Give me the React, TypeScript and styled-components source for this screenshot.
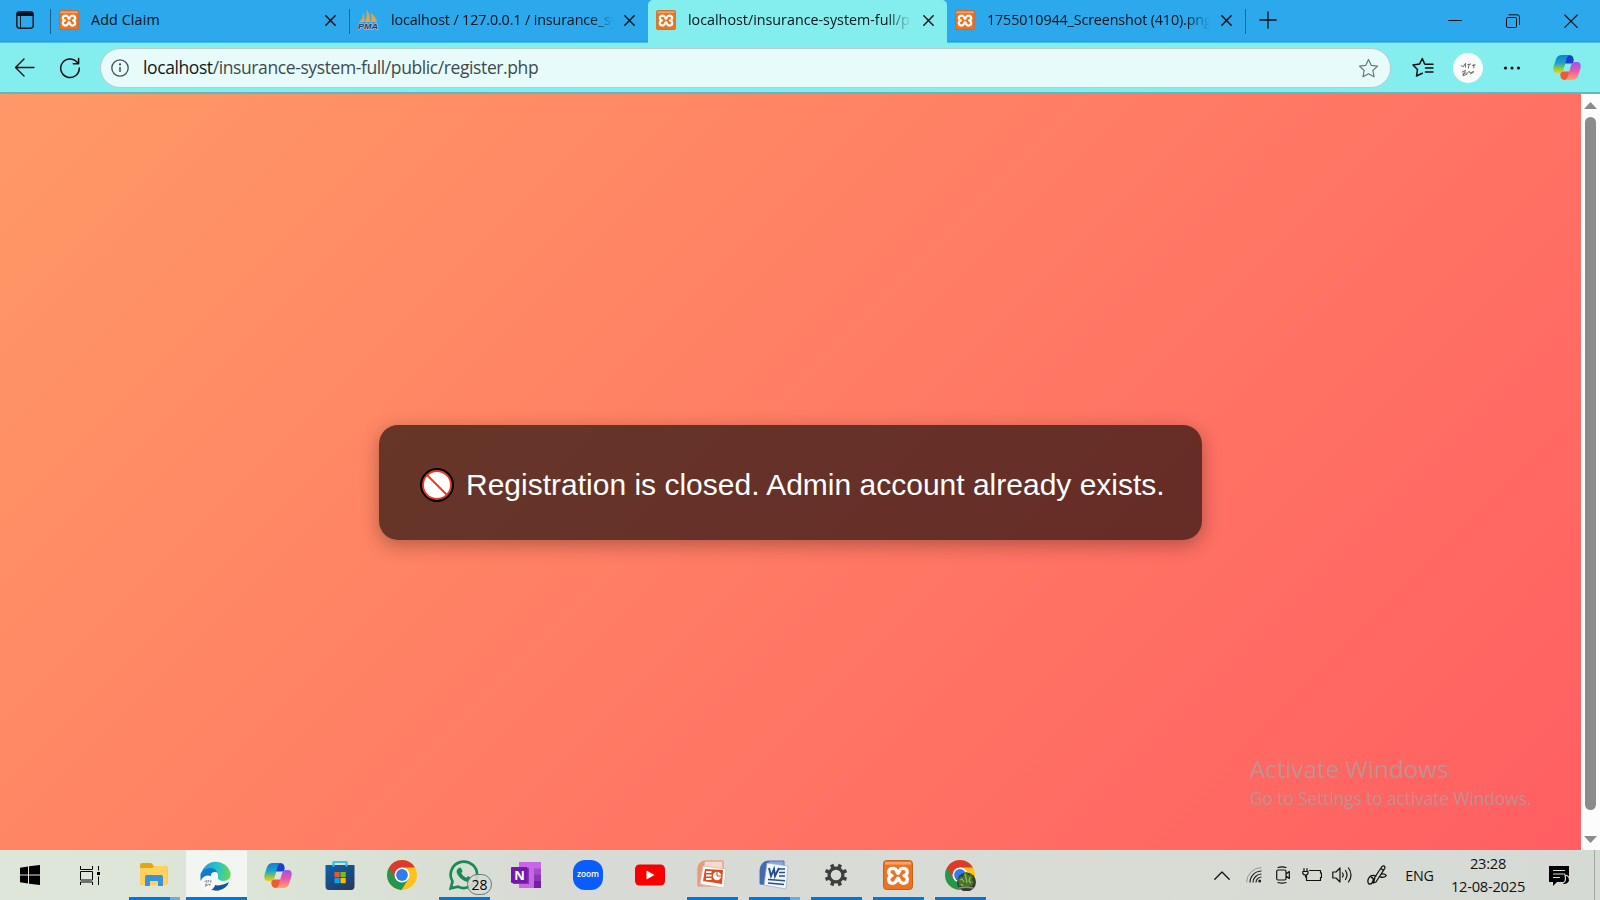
import React, { ReactNode } from "react";
import styled, { createGlobalStyle } from "styled-components";

const GlobalStyle = createGlobalStyle`
  * { box-sizing: border-box; }
  body { margin: 0; overflow: hidden; font-family: "Open Sans", "Noto Sans", sans-serif; color: #111; }
  svg { display: block; flex: none; }
`;

const Screen = styled.div`
  width: 1600px;
  height: 900px;
  display: flex;
  flex-direction: column;
  overflow: hidden;
`;

/* ---------- tab strip ---------- */
const TabStrip = styled.div`
  height: 43px;
  flex: none;
  display: flex;
  background: linear-gradient(#2ba9ec 0 39px, #289fe0 42px, #45bdec 42px);
`;
const WorkspaceButton = styled.div`
  width: 50px;
  padding: 11px 0 0 16px;
`;
const Separator = styled.div`
  width: 1px;
  height: 25px;
  margin-top: 9px;
  background: #17618b;
`;
const Tab = styled.div<{ $active?: boolean }>`
  width: ${(p) => (p.$active ? 299 : 298)}px;
  height: 43px;
  flex: none;
  display: flex;
  align-items: flex-start;
  padding: 10px 13px 0 8px;
  background: ${(p) => (p.$active ? "#84edee" : "transparent")};
  border-radius: 5px 5px 0 0;
`;
const TabTitle = styled.span<{ $fade?: boolean; $spacing?: number }>`
  width: 223px;
  height: 22px;
  margin: -1px 0 0 12px;
  font-size: 14.3px;
  line-height: 21px;
  letter-spacing: ${(p) => p.$spacing ?? 0}px;
  color: #04141c;
  white-space: nowrap;
  overflow: hidden;
  ${(p) => p.$fade && "mask-image: linear-gradient(90deg, #000 calc(100% - 24px), transparent);"}
`;
const TabClose = styled.div`
  margin: 5px 0 0 auto;
`;
const NewTab = styled.div`
  padding: 11px 0 0 13px;
`;
const WindowControls = styled.div`
  margin-left: auto;
  display: flex;
`;
const WindowButton = styled.div`
  width: 58px;
  height: 42px;
  display: flex;
  justify-content: center;
  align-items: center;
`;

/* ---------- toolbar ---------- */
const Toolbar = styled.div`
  height: 51px;
  flex: none;
  display: flex;
  padding: 5px 19px 0 14px;
  background: #84edee;
  border-bottom: 2px solid #62b7ba;
`;
const NavButton = styled.div<{ $w: number }>`
  width: ${(p) => p.$w}px;
  height: 39px;
  display: flex;
  align-items: center;
`;
const AddressBar = styled.div`
  width: 1291px;
  height: 40px;
  display: flex;
  align-items: center;
  padding: 0 11px 0 10px;
  background: #e7fbfb;
  border: 1px solid #b9cccd;
  border-radius: 20px;
`;
const Url = styled.span`
  flex: 1;
  margin: -2px 0 0 14px;
  font-size: 17.5px;
  line-height: 24px;
  letter-spacing: -0.4px;
  color: #3e4a4e;
  b { font-weight: 400; color: #11181a; }
`;
const ToolbarActions = styled.div`
  flex: 1;
  height: 39px;
  display: flex;
  align-items: center;
  padding-left: 21px;
`;
const Avatar = styled.div`
  width: 30px;
  height: 30px;
  margin: 0 20px 0 19px;
  border-radius: 50%;
  background: #fafbfb;
`;
const CopilotButton = styled.div`
  margin-left: auto;
`;

/* ---------- page ---------- */
const Viewport = styled.div`
  position: relative;
  height: 756px;
  flex: none;
  display: flex;
`;
const PageScroll = styled.div`
  flex: 1;
  overflow: hidden;
`;
const PageBody = styled.main`
  height: 777px;
  display: flex;
  align-items: center;
  justify-content: center;
  background: linear-gradient(135deg, #ff9966, #ff5e62);
`;
const Notice = styled.div`
  width: 823px;
  height: 115px;
  display: flex;
  align-items: center;
  padding: 4px 0 0 41px;
  gap: 12px;
  border-radius: 19px;
  background: rgba(0, 0, 0, 0.6);
  box-shadow: 0 5px 19px rgba(0, 0, 0, 0.3);
  color: #fff;
  font: 30px/38px "Liberation Sans", Arial, sans-serif;
  white-space: nowrap;
`;
const ScrollTrack = styled.div`
  width: 19px;
  display: flex;
  flex-direction: column;
  align-items: center;
  padding: 8px 0 7px;
  background: #fcfcfc;
`;
const ScrollThumb = styled.div`
  width: 11px;
  height: 693px;
  margin: 8px 0 auto;
  border-radius: 6px;
  background: #8b8b8b;
`;
const Watermark = styled.div`
  position: absolute;
  left: 1250px;
  top: 657px;
  color: rgba(160, 165, 162, 0.68);
  white-space: nowrap;
`;
const WatermarkTitle = styled.div`
  font-size: 24.5px;
  line-height: 36px;
  letter-spacing: -0.15px;
`;
const WatermarkText = styled.div`
  font-size: 17.6px;
  line-height: 23px;
  letter-spacing: -0.2px;
`;

/* ---------- taskbar ---------- */
const Taskbar = styled.div`
  height: 50px;
  flex: none;
  display: flex;
  background: linear-gradient(90deg, #dde6d8 0, #dce5d7 250px, #d8dbd5 550px, #d8dcd5 1100px, #d6dad4 100%);
`;
const SystemButton = styled.div`
  width: 60px;
  height: 50px;
  display: flex;
  align-items: center;
  justify-content: center;
`;
const AppList = styled.div`
  display: flex;
  gap: 1px;
  margin-left: 4px;
`;
const AppButton = styled.div<{ $focused?: boolean; $state?: "one" | "many" }>`
  position: relative;
  width: 61px;
  height: 50px;
  display: flex;
  align-items: center;
  justify-content: center;
  padding-right: 2px;
  background: ${(p) => (p.$focused ? "#f3f5f1" : "transparent")};
  &::after {
    content: "";
    position: absolute;
    bottom: 0;
    left: ${(p) => (p.$focused ? 0 : 5)}px;
    right: ${(p) => (p.$focused ? 0 : 5)}px;
    height: 3px;
    background: ${(p) =>
      p.$state === "many"
        ? "linear-gradient(90deg, #0078d7 41px, #69ade3 41px)"
        : p.$state || p.$focused
        ? "#0078d7"
        : "transparent"};
  }
`;
const CountBadge = styled.span`
  position: absolute;
  left: 33px;
  top: 24px;
  width: 25px;
  height: 21px;
  border: 1px solid #6c7370;
  border-radius: 11px;
  background: rgba(214, 220, 214, 0.9);
  font-size: 14px;
  font-weight: 500;
  line-height: 19px;
  text-align: center;
  color: #000;
`;
const Tray = styled.div`
  margin-left: auto;
  display: flex;
`;
const TrayItem = styled.div<{ $w: number }>`
  width: ${(p) => p.$w}px;
  height: 50px;
  display: flex;
  align-items: center;
  justify-content: center;
`;
const Language = styled.span`
  font-size: 14.3px;
  letter-spacing: -0.25px;
`;
const Clock = styled.div`
  width: 92px;
  padding-top: 2px;
  text-align: center;
  font-size: 14.7px;
  line-height: 23px;
  letter-spacing: -0.25px;
  white-space: nowrap;
`;
const ShowDesktop = styled.div`
  width: 6px;
  margin-left: 10px;
  border-left: 1px solid #a3a7a2;
`;

/* ---------- icons ---------- */
const Line = ({ w, h = w, d, sw = 1.3, color = "#111" }: { w: number; h?: number; d: string; sw?: number; color?: string }) => (
  <svg width={w} height={h} viewBox={`0 0 ${w} ${h}`} fill="none" stroke={color} strokeWidth={sw} strokeLinecap="round" strokeLinejoin="round">
    <path d={d} />
  </svg>
);

const Xampp = ({ size }: { size: number }) => (
  <svg width={size} height={size} viewBox="0 0 30 30">
    <rect x=".5" y=".5" width="29" height="29" rx="3" fill="#ee7321" stroke="#c7601c" />
    <path d="M2 2h26v2.6H2z" fill="#f3a26b" />
    <path
      d="M15 13.400C13.500 12.800 14.200 8.300 10.200 8.300C7.200 8.300 5.800 9.600 5.800 12C5.800 14.200 7 15.200 9 15.700C6.900 16.200 5.700 17.500 5.700 19.600C5.700 22 7.200 23.300 9.700 23.300C14.300 23.300 13.400 18.300 15 18.100C16.600 18.300 15.700 23.300 20.300 23.300C22.800 23.300 24.300 22 24.300 19.600C24.300 17.500 23.100 16.200 21 15.700C23 15.200 24.200 14.200 24.200 12C24.200 9.600 22.800 8.300 19.800 8.300C15.800 8.300 16.500 12.800 15 13.400Z"
      fill="none" stroke="#fff" strokeWidth="3.300" strokeLinejoin="round"
    />
  </svg>
);

const PhpMyAdmin = () => (
  <svg width="21" height="20" viewBox="0 0 21 20">
    <path d="M1 12C4 10 5 7 5.200 3C6.500 6 6.800 9 6 12zM6.800 12C9 8 9 4 8.500 0C12 4 12.500 8 12 12zM12.500 12C14 9 13.500 6 12.700 3C17 6 18.500 9 19 12z" fill="#f5a12d" />
    <path d="M5.200 3L6 12M8.500 0L12 12M12.700 3L19 12" stroke="#c9a56c" strokeWidth=".7" />
    <text x="0" y="19.200" fontFamily="Liberation Sans" fontSize="8" fontWeight="700" fontStyle="italic" textLength="20" lengthAdjust="spacingAndGlyphs" fill="#2b3564" stroke="#c9c6d3" strokeWidth="1" paintOrder="stroke">PMA</text>
  </svg>
);

const Copilot = ({ id }: { id: string }) => (
  <svg width="28" height="27" viewBox="0 0 28 27">
    <defs>
      <linearGradient id={`${id}a`} x1="0" y1="0" x2="0" y2="1">
        <stop offset="0" stopColor="#0d7fdb" /><stop offset=".45" stopColor="#1fa2c8" /><stop offset=".75" stopColor="#8fc44a" /><stop offset="1" stopColor="#f5cb12" />
      </linearGradient>
      <linearGradient id={`${id}b`} x1="0" y1="0" x2="0" y2="1">
        <stop offset="0" stopColor="#9a55ee" /><stop offset=".5" stopColor="#ed56a8" /><stop offset="1" stopColor="#ffa465" />
      </linearGradient>
    </defs>
    <path d="M8 17.500Q6.500 21 8 24Q9 26 12 26H19L16 17.500z" fill="#ef5a35" />
    <path d="M20 9.500Q21.500 6 20 3Q19 1 16 1H10L12 9.500z" fill="#1b3fc8" />
    <path d="M9 1H16.500Q14 2 13 7L10.500 15.500Q9.500 19 6 19H4Q-.8 19 .6 12.500L3 5Q4.500 1 9 1z" fill={`url(#${id}a)`} />
    <path d="M19 26H12Q14.500 25 15.500 20L18 11.500Q19 8 22 8H24Q28.800 8 27.400 14.500L25 22Q23.500 26 19 26z" fill={`url(#${id}b)`} />
  </svg>
);

const Chrome = ({ avatar }: { avatar?: boolean }) => (
  <svg width="32" height="32" viewBox="0 0 32 32">
    <circle cx="16" cy="16" r="15" fill="#ffc31f" />
    <path d="M16 16L3 8.500A15 15 0 0 0 15.500 31L22.500 19.800z" fill="#26964a" />
    <path d="M3 8.500A15 15 0 0 1 29 8.500H16L9.500 19.700z" fill="#dc3a2d" />
    <circle cx="16" cy="16" r="7.500" fill="#fff" />
    <circle cx="16" cy="16" r="5.900" fill="#2f7de9" />
    {avatar && (
      <>
        <circle cx="22.500" cy="23" r="9.500" fill="#373b31" />
        <path d="M14 20l3-2.500 2 .5 1-4 3-1 1 3 3-1 2 3-1 3 2 2-2 4-6 1-7-1z" fill="#47752a" />
        <path d="M16 21l2-1 2 3m1-8l1 4 1 5m3-6l-1 4 2 2m-10 1l2 2" stroke="#8dbb55" strokeWidth="1.300" fill="none" />
        <path d="M15 29q7-1.500 14 0" stroke="#8b8d88" strokeWidth="1.500" fill="none" />
      </>
    )}
  </svg>
);

const scribble = "M1 3l3 1 1-3M6 0v5m2-3l4-1m-2 0l-1 5m4-3l4-1m-2-1v5M2 10l4-2-3 5 4-3m0 2l3-3 1 2 4-2m-12 5l5-2m3 0l4-2";

const FileExplorer = () => (
  <svg width="28" height="24" viewBox="0 0 28 24">
    <path d="M0 2Q0 0 2 0H11Q13 1 13.500 3H25Q27.500 3 27.500 5.500V20Q27.500 22 25 22H2Q0 22 0 20z" fill="#e4a513" />
    <path d="M0 5H12L15 3H25Q27.500 3 27.500 5.500V20Q27.500 22 25 22H2Q0 22 0 20z" fill="#ffd15d" />
    <path d="M5 23V14Q5 12 7 12H21Q23 12 23 14V23H18V18H10V23z" fill="#3e91d3" />
  </svg>
);

const Edge = () => (
  <svg width="31" height="31" viewBox="0 0 31 31">
    <defs>
      <linearGradient id="edgeTop" x1="0" y1=".5" x2="1" y2=".6"><stop stopColor="#239bd8" /><stop offset=".55" stopColor="#2ac5c5" /><stop offset="1" stopColor="#67d94c" /></linearGradient>
    </defs>
    <path d="M1 16A15 15 0 0 1 30.500 13C31 18 28 21 23 21Q17 20 18 17Q18.500 15 16 12Q9 8 1 16z" fill="url(#edgeTop)" />
    <path d="M.5 20V14Q3 8 10 8Q15 8 17 12Q12 12 11 19Q10 28 20 30Q9 32 3 24z" fill="#127bcb" />
    <path d="M10 20Q13 27 21 25Q26 24 29 22Q27 28 20 30Q13 32 9 26z" fill="#17549f" />
    <circle cx="14.500" cy="15.500" r="3.500" fill="#f7f8f7" />
    <circle cx="8" cy="23" r="7.500" fill="#f7f8f7" />
    <path transform="translate(4 20) scale(.45)" d={scribble} stroke="#666" strokeWidth="1.300" fill="none" />
  </svg>
);

const Store = () => (
  <svg width="30" height="30" viewBox="0 0 30 30">
    <defs><linearGradient id="storeBag" x1="0" y1="0" x2=".8" y2="1"><stop stopColor="#0765ad" /><stop offset="1" stopColor="#273960" /></linearGradient></defs>
    <path d="M8.500 7V2H21.500V7" fill="none" stroke="#39bff2" strokeWidth="2" />
    <path d="M.5 5H29.500V26Q29.500 30 26 30H4Q.5 30 .5 26z" fill="url(#storeBag)" />
    <path d="M8.500 6.500V3M21.500 6.500V3" stroke="#39bff2" strokeWidth="2" />
    <path d="M9.500 12h5.200v5.200H9.500z" fill="#f35325" /><path d="M15.500 12h5.200v5.200h-5.200z" fill="#81bc06" />
    <path d="M9.500 18h5.200v5.200H9.500z" fill="#05a6f0" /><path d="M15.500 18h5.200v5.200h-5.200z" fill="#ffba08" />
  </svg>
);

const WhatsApp = () => (
  <svg width="30" height="30" viewBox="0 0 30 30">
    <path d="M1.700 28.300L3.500 21.500A13.200 13.200 0 1 1 9 26.600z" fill="none" stroke="#178a55" strokeWidth="2.700" />
    <path d="M10 8q1-1 2 0l1.500 3q0 1-1.300 2q1.800 3.400 5 4.800q1.300-1.700 2-1.500l3 1.500q.8 1-.5 2.700q-2 2-5 .9q-7-2.800-9-8.900Q7.200 9.500 10 8z" fill="#178a55" />
  </svg>
);

const OneNote = () => (
  <svg width="30" height="26" viewBox="0 0 30 26">
    <path d="M8 0h22v26H8z" fill="#c965e9" /><path d="M23 6.500h7v6.500h-7z" fill="#a54cca" /><path d="M23 12.500h7V19h-7z" fill="#8e37b4" /><path d="M23 19h7v7h-7z" fill="#7420a5" />
    <rect x="2" y="6" width="16" height="16" fill="#8136a5" /><rect y="5" width="16.500" height="16" rx="1" fill="#7518a9" />
    <text x="3.300" y="17.800" fontFamily="Open Sans" fontSize="13" fontWeight="700" fill="#fff">N</text>
  </svg>
);

const Zoom = () => (
  <svg width="30" height="30" viewBox="0 0 30 30">
    <rect width="30" height="30" rx="12" fill="#0b5cff" />
    <text x="4" y="17.200" fontFamily="Open Sans" fontSize="8" fontWeight="600" textLength="22" lengthAdjust="spacingAndGlyphs" fill="#fff">zoom</text>
  </svg>
);

const YouTube = () => (
  <svg width="30" height="22" viewBox="0 0 30 22"><rect y=".5" width="30" height="21" rx="4.500" fill="#f90000" /><path d="M11.500 6.500L19.500 11l-8 4.500z" fill="#fff" /></svg>
);

const PowerPoint = () => (
  <svg width="30" height="30" viewBox="0 0 30 30">
    <path d="M1 8Q2 1 9 1H26V26H1z" fill="#f6dacd" stroke="#e28b6b" />
    <path d="M1 25V9Q2 1 8 1L5 26z" fill="#ea9a79" />
    <path d="M6 6L29 9L27 28L3 24z" fill="#fff" stroke="#dab5a7" strokeWidth=".7" />
    <path d="M8 9L26 10L25 24L6 21z" fill="#dc4c1e" />
    <path d="M9 12h5.500M9 15.500h5.500M9 19h5.500" stroke="#fff" strokeWidth="2" />
    <circle cx="20" cy="16" r="4.200" fill="#fff" /><path d="M20 16V11.500M20 16h4.500" stroke="#dc4c1e" strokeWidth="1.100" />
  </svg>
);

const Word = () => (
  <svg width="30" height="30" viewBox="0 0 30 30">
    <path d="M1 10Q2 1 10 1H25V25L1 24z" fill="#89a6da" stroke="#5274b8" />
    <path d="M1 24V9Q3 1 10 1L6 25z" fill="#4668ac" />
    <path d="M8 3L29 6L27 29L5 25z" fill="#f3f7fc" stroke="#8eaed9" strokeWidth=".7" />
    <path d="M20 9h6M20 12.500h6M20 16h6M9 19.500l17 1.200M9 23l16 1.500" stroke="#274c93" strokeWidth="1.500" />
    <path d="M10 8l2 8 3-7 1 7 4-8" fill="none" stroke="#274c93" strokeWidth="1.900" />
  </svg>
);

const Gear = () => (
  <svg width="24" height="24" viewBox="0 0 24 24" fill="none" stroke="#3c3f3c">
    <circle cx="12" cy="12" r="6.900" strokeWidth="3.200" />
    {[22.5, 67.5, 112.5, 157.5, 202.5, 247.5, 292.5, 337.5].map((a) => (
      <path key={a} d="M12 .7V4.500" strokeWidth="3.600" transform={`rotate(${a} 12 12)`} />
    ))}
  </svg>
);

const Prohibited = () => (
  <svg width="34" height="34" viewBox="0 0 34 34">
    <circle cx="17" cy="17" r="17" fill="#000" /><circle cx="17" cy="17" r="14" fill="#fff" stroke="#e83d1c" strokeWidth="1.900" />
    <path d="M7.500 7.500l19 19" stroke="#e83d1c" strokeWidth="2" />
  </svg>
);

const starPath = "M10.500 1.500L13.200 7.300L19.500 8.100L14.900 12.500L16 18.800L10.500 15.700L5 18.800L6.100 12.500L1.500 8.100L7.800 7.300z";

type TabData = { title: string; icon: ReactNode; active?: boolean; fade?: boolean; spacing?: number };
const tabs: TabData[] = [
  { title: "Add Claim", icon: <Xampp size={20} />, spacing: 0.12 },
  { title: "localhost / 127.0.0.1 / insurance_sy", icon: <PhpMyAdmin />, fade: true, spacing: -0.12 },
  { title: "localhost/insurance-system-full/pu", icon: <Xampp size={20} />, active: true, fade: true },
  { title: "1755010944_Screenshot (410).png", icon: <Xampp size={20} />, fade: true, spacing: -0.12 },
];

type AppData = { name: string; icon: ReactNode; state?: "one" | "many"; focused?: boolean; badge?: string };
const apps: AppData[] = [
  { name: "explorer", icon: <FileExplorer />, state: "many" },
  { name: "edge", icon: <Edge />, focused: true },
  { name: "copilot", icon: <Copilot id="task" /> },
  { name: "store", icon: <Store /> },
  { name: "chrome", icon: <Chrome /> },
  { name: "whatsapp", icon: <WhatsApp />, state: "one", badge: "28" },
  { name: "onenote", icon: <OneNote /> },
  { name: "zoom", icon: <Zoom /> },
  { name: "youtube", icon: <YouTube /> },
  { name: "powerpoint", icon: <PowerPoint />, state: "one" },
  { name: "word", icon: <Word />, state: "many" },
  { name: "settings", icon: <Gear />, state: "one" },
  { name: "xampp", icon: <Xampp size={30} />, state: "one" },
  { name: "chrome-profile", icon: <Chrome avatar />, state: "one" },
];

export default function App() {
  return (
    <Screen>
      <GlobalStyle />
      <TabStrip>
        <WorkspaceButton>
          <svg width="18" height="18" viewBox="0 0 18 18">
            <rect x=".8" y=".8" width="16.400" height="16.400" rx="3" fill="none" stroke="#0b1e29" strokeWidth="1.500" />
            <path d="M1 4Q1 1 4 1H14Q17 1 17 4V5H1z" fill="#051118" /><path d="M4.500 5v12" stroke="#0b1e29" />
          </svg>
        </WorkspaceButton>
        {tabs.map((t, i) => (
          <React.Fragment key={t.title}>
            {i < 2 && <Separator />}
            <Tab $active={t.active}>
              {t.icon}
              <TabTitle $fade={t.fade} $spacing={t.spacing}>{t.title}</TabTitle>
              <TabClose><Line w={11} d="M.8 .8l9.400 9.400M10.200 .8L.8 10.200" sw={1.4} /></TabClose>
            </Tab>
          </React.Fragment>
        ))}
        <Separator />
        <NewTab><Line w={18} d="M9 .8v16.400M.8 9h16.400" sw={1.3} /></NewTab>
        <WindowControls>
          <WindowButton><Line w={14} d="M.5 6.500h13" sw={1} /></WindowButton>
          <WindowButton><Line w={14} d="M.5 4.500Q.5 3.500 1.500 3.500H9.500Q10.500 3.500 10.500 4.500V12.500Q10.500 13.500 9.500 13.500H1.500Q.5 13.500 .5 12.500zM3 .8H11Q13.500 .8 13.500 3V10.500" sw={1} /></WindowButton>
          <WindowButton><Line w={14} d="M.8 1l12.400 12.400M13.200 1L.8 13.400" sw={1.1} /></WindowButton>
        </WindowControls>
      </TabStrip>

      <Toolbar>
        <NavButton $w={45}><Line w={21} d="M10 2L1.500 10.500L10 19M1.500 10.500H20" sw={1.4} /></NavButton>
        <NavButton $w={41}><Line w={22} d="M19 6.500A9.300 9.300 0 1 0 20.300 11M19.600 1.500V6.800H14.300" sw={1.5} /></NavButton>
        <AddressBar>
          <svg width="18" height="18" viewBox="0 0 18 18" fill="none" stroke="#455154" strokeWidth="1.300">
            <circle cx="9" cy="9" r="8.200" /><path d="M9 8v5" strokeWidth="1.500" /><circle cx="9" cy="5.400" r=".5" />
          </svg>
          <Url><b>localhost</b>/insurance-system-full/public/register.php</Url>
          <Line w={21} d={starPath} sw={1.2} color="#6a787a" />
        </AddressBar>
        <ToolbarActions>
          <svg width="22" height="21" viewBox="0 0 22 21" fill="none" stroke="#111" strokeWidth="1.500" strokeLinecap="round" strokeLinejoin="round">
            <path d="M14 7.300L12.700 7.100L10.300 1.500L7.500 7.100L1 8L5.500 12.500L4.500 19L10.300 16.200M13.500 11H21M13.500 7.300H21M13.500 15H21" />
          </svg>
          <Avatar>
            <svg width="30" height="30" viewBox="0 0 30 30"><path transform="translate(7 10) scale(.92)" d={scribble} stroke="#555" strokeWidth=".9" fill="none" /></svg>
          </Avatar>
          <svg width="18" height="6" viewBox="0 0 18 6" fill="#111"><circle cx="2.500" cy="3" r="1.600" /><circle cx="9" cy="3" r="1.600" /><circle cx="15.500" cy="3" r="1.600" /></svg>
          <CopilotButton><Copilot id="bar" /></CopilotButton>
        </ToolbarActions>
      </Toolbar>

      <Viewport>
        <PageScroll>
          <PageBody>
            <Notice><Prohibited /><span>Registration is closed. Admin account already exists.</span></Notice>
          </PageBody>
        </PageScroll>
        <ScrollTrack>
          <svg width="13" height="7" viewBox="0 0 13 7"><path d="M6.500 0L13 7H0z" fill="#8b8b8b" /></svg>
          <ScrollThumb />
          <svg width="13" height="7" viewBox="0 0 13 7"><path d="M6.500 7L13 0H0z" fill="#8b8b8b" /></svg>
        </ScrollTrack>
        <Watermark>
          <WatermarkTitle>Activate Windows</WatermarkTitle>
          <WatermarkText>Go to Settings to activate Windows.</WatermarkText>
        </Watermark>
      </Viewport>

      <Taskbar>
        <SystemButton>
          <svg width="20" height="20" viewBox="0 0 20 20"><path d="M0 2.800L8 1.500V9.400H0zM9 1.300L20 0V9.400H9zM0 10.400H8V18.500L0 17.300zM9 10.400H20V20L9 18.700z" fill="#000" /></svg>
        </SystemButton>
        <SystemButton>
          <svg width="20" height="19" viewBox="0 0 20 19" fill="none" stroke="#000" strokeWidth="1">
            <path d="M.5 0V3.500H12.500V0M.5 19V16H12.500V19M.5 5.500H12.500V14H.5zM18.500 0V4.500M18.500 10.500V19" /><path d="M17 6h3v3h-3z" fill="#000" stroke="none" />
          </svg>
        </SystemButton>
        <AppList>
          {apps.map((a) => (
            <AppButton key={a.name} $state={a.state} $focused={a.focused}>
              {a.icon}
              {a.badge && <CountBadge>{a.badge}</CountBadge>}
            </AppButton>
          ))}
        </AppList>
        <Tray>
          <TrayItem $w={32}><Line w={16} h={9} d="M.8 8.200L8 1l7.200 7.200" sw={1.3} /></TrayItem>
          <TrayItem $w={31}>
            <svg width="16" height="16" viewBox="0 0 16 16" fill="none" stroke="#222">
              <path d="M.6 15.500A15 15 0 0 1 15.500 .6" stroke="#929792" /><path d="M4 15.500A11.500 11.500 0 0 1 15.500 4M7 15.500A8.500 8.500 0 0 1 15.500 7M10 15.500A5.500 5.500 0 0 1 15.500 10" strokeWidth="1.200" /><circle cx="13.700" cy="14" r="1.500" fill="#222" stroke="none" />
            </svg>
          </TrayItem>
          <TrayItem $w={28}><Line w={14} h={18} d="M2 1.500Q6 .2 10 1.500M2 16.500Q6 17.800 10 16.500M2 4H8.500Q10 4 10 5.500V12.500Q10 14 8.500 14H2Q.7 14 .7 12.500V5.500Q.7 4 2 4zM10 8L13.300 5.500V12.500L10 10" sw={1.2} /></TrayItem>
          <TrayItem $w={30}><Line w={20} h={14} d="M7.500 2.500H18.500V5H19.500V9.500H18.500V12.500H4.500V8M2 .7V3M5 .7V3M.8 3.500H6V5.500Q5.500 7 3.500 7Q1.300 7 .8 5.500zM3.500 7V9" sw={1.2} /></TrayItem>
          <TrayItem $w={30}><Line w={20} h={18} d="M.8 6H4L8 2V16L4 12H.8zM10.500 7Q12 9 10.500 11M13.500 4.500Q16.500 9 13.500 13.500M16.500 2Q21.500 9 16.500 16" sw={1.2} /></TrayItem>
          <TrayItem $w={40}><Line w={20} h={20} d="M8 12L15 1.500Q17 .2 18 2Q18 3.500 17 4.500L9 17L6.500 18zM14 3.500L16.500 5.500M9 11Q4 9 1.500 13.500Q0 17 2 19Q5 19.500 6 16Q7 13 4.500 12.500M14.500 9Q18 8.500 19.300 10.500Q18 13 13.500 12" sw={1.3} /></TrayItem>
          <TrayItem $w={45}><Language>ENG</Language></TrayItem>
          <Clock>23:28<br />12-08-2025</Clock>
          <TrayItem $w={50}>
            <svg width="21" height="21" viewBox="0 0 21 21">
              <path d="M0 1H20V17H8L4 21V17H0z" fill="#000" /><path d="M4 5.500H16M4 9H16M4 12.500H11" stroke="#d8dcd5" strokeWidth="1.200" />
              <path d="M16 10Q21 11 20.500 16Q18 21 12 19Q18 17.500 16 10z" fill="#000" stroke="#d8dcd5" strokeWidth="1.200" />
            </svg>
          </TrayItem>
          <ShowDesktop />
        </Tray>
      </Taskbar>
    </Screen>
  );
}
